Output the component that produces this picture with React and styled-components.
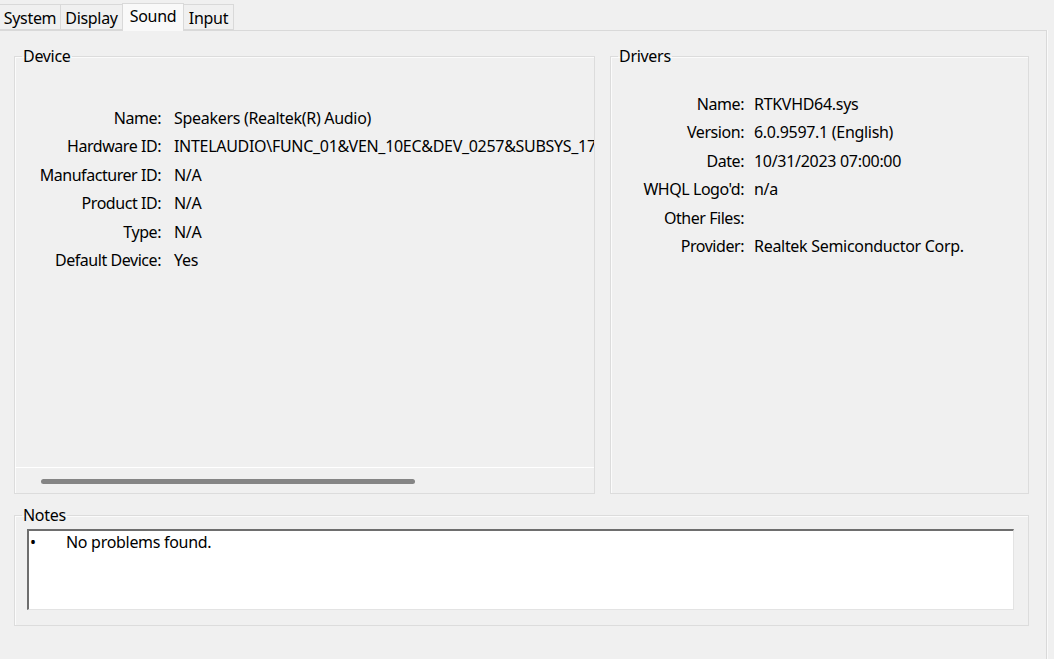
import React from 'react';
import styled, { createGlobalStyle } from 'styled-components';

const GlobalStyle = createGlobalStyle`
    html, body {
        margin: 0;
        padding: 0;
        background: #f0f0f0;
        overflow: hidden;
    }
    body {
        font-family: "Noto Sans", "Open Sans", sans-serif;
        font-size: 16px;
        color: #000;
    }
`;

const Window = styled.div`
    width: 1054px;
    height: 659px;
    display: flex;
    flex-direction: column;
    background: #f0f0f0;
`;

const TabStrip = styled.div`
    display: flex;
    align-items: flex-end;
    height: 30px;
    position: relative;
    z-index: 1;
`;

const Tab = styled.div`
    box-sizing: border-box;
    height: ${p => (p.$active ? '28px' : '26px')};
    width: ${p => p.$w}px;
    margin-bottom: ${p => (p.$active ? '-1px' : '0')};
    padding-top: ${p => (p.$active ? '2px' : '3px')};
    text-align: center;
    line-height: 20px;
    background: ${p => (p.$active ? '#f9f9f9' : '#f0f0f0')};
    border: 1px solid #d9d9d9;
    border-bottom: ${p => (p.$active ? 'none' : '1px solid #d9d9d9')};
    border-left: ${p => (p.$first ? 'none' : '1px solid #d9d9d9')};
    margin-left: ${p => (p.$first ? '0' : '-1px')};
    letter-spacing: -0.3px;
`;

const Panel = styled.div`
    flex: 1;
    margin-right: 7px;
    border-top: 1px solid #d9d9d9;
    border-right: 1px solid #d9d9d9;
    box-shadow: 1px 0 0 #fafafa;
    padding: 14px 0 0 14px;
    display: flex;
    flex-direction: column;
    gap: 10px;
`;

const Columns = styled.div`
    display: grid;
    grid-template-columns: 581px 419px;
    column-gap: 15px;
    height: 449px;
`;

const Group = styled.fieldset`
    box-sizing: border-box;
    margin: 0;
    padding: 0;
    min-width: 0;
    width: ${p => (p.$w ? `${p.$w}px` : 'auto')};
    height: ${p => p.$h}px;
    border: 1px solid #dcdcdc;
    box-shadow: inset 1px 1px 0 #fbfbfb;
    display: flex;
    flex-direction: column;
`;

const Legend = styled.legend`
    margin-left: 7px;
    padding: 0 1px;
    line-height: 22px;
    letter-spacing: -0.3px;
`;

const Rows = styled.div`
    flex: 1;
    overflow: hidden;
    padding-top: ${p => p.$top}px;
    display: grid;
    grid-template-columns: ${p => p.$label}px auto;
    column-gap: ${p => p.$gap}px;
    grid-auto-rows: 28.4px;
    align-content: start;
    white-space: nowrap;
`;

const Label = styled.div`
    text-align: right;
    line-height: 28.4px;
    letter-spacing: -0.45px;
`;

const Value = styled.div`
    line-height: 28.4px;
    letter-spacing: -0.3px;
`;

const ScrollTrack = styled.div`
    height: 26px;
    border-top: 1px solid #ffffff;
    padding: 11px 0 0 26px;
    box-sizing: border-box;
`;

const ScrollThumb = styled.div`
    width: 374px;
    height: 5px;
    border-radius: 3px;
    background: #858585;
`;

const NotesBox = styled.div`
    margin: 3px 14px 14px 12px;
    height: 81px;
    box-sizing: border-box;
    background: #fff;
    border-top: 2px solid #6e6e6e;
    border-left: 2px solid #6e6e6e;
    border-right: 1px solid #e3e3e3;
    border-bottom: 1px solid #e3e3e3;
    padding: 0 0 0 1px;
    display: flex;
    letter-spacing: -0.3px;
`;

const Bullet = styled.span`
    width: 36px;
    line-height: 22px;
`;

const NoteText = styled.span`
    line-height: 22px;
`;

const deviceRows = [
    ['Name:', 'Speakers (Realtek(R) Audio)'],
    ['Hardware ID:', 'INTELAUDIO\\FUNC_01&VEN_10EC&DEV_0257&SUBSYS_17AA3802&REV_1000'],
    ['Manufacturer ID:', 'N/A'],
    ['Product ID:', 'N/A'],
    ['Type:', 'N/A'],
    ['Default Device:', 'Yes'],
];

const driverRows = [
    ['Name:', 'RTKVHD64.sys'],
    ['Version:', '6.0.9597.1 (English)'],
    ['Date:', '10/31/2023 07:00:00'],
    ["WHQL Logo'd:", 'n/a'],
    ['Other Files:', ''],
    ['Provider:', 'Realtek Semiconductor Corp.'],
];

const tabs = [
    { name: 'System', w: 61 },
    { name: 'Display', w: 63 },
    { name: 'Sound', w: 62, active: true },
    { name: 'Input', w: 51 },
];

function InfoRows({ rows, ...props }) {
    return (
        <Rows {...props}>
            {rows.map(([label, value]) => (
                <React.Fragment key={label}>
                    <Label>{label}</Label>
                    <Value>{value}</Value>
                </React.Fragment>
            ))}
        </Rows>
    );
}

export default function App() {
    return (
        <Window>
            <GlobalStyle />
            <TabStrip>
                {tabs.map((t, i) => (
                    <Tab key={t.name} $w={t.w} $active={t.active} $first={i === 0}>
                        {t.name}
                    </Tab>
                ))}
            </TabStrip>
            <Panel>
                <Columns>
                    <Group $h={449}>
                        <Legend>Device</Legend>
                        <InfoRows rows={deviceRows} $top={37} $label={146} $gap={13} />
                        <ScrollTrack>
                            <ScrollThumb />
                        </ScrollTrack>
                    </Group>
                    <Group $h={449}>
                        <Legend>Drivers</Legend>
                        <InfoRows rows={driverRows} $top={23} $label={133} $gap={10} />
                    </Group>
                </Columns>
                <Group $h={122} $w={1015}>
                    <Legend>Notes</Legend>
                    <NotesBox>
                        <Bullet>•</Bullet>
                        <NoteText>No problems found.</NoteText>
                    </NotesBox>
                </Group>
            </Panel>
        </Window>
    );
}
